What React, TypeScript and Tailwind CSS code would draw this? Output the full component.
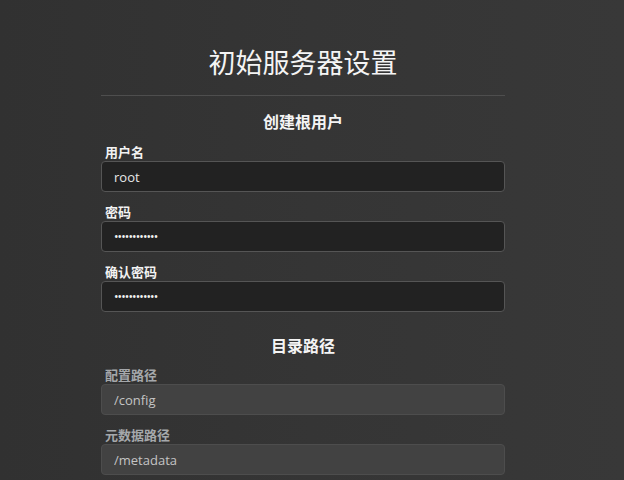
import React, { useState } from 'react';

type FieldProps = {
  label: string;
  value: string;
  type?: string;
  disabled?: boolean;
  onChange?: (v: string) => void;
};

function Field({ label, value, type = 'text', disabled, onChange }: FieldProps) {
  const secret = type === 'password';
  return (
    <div className="flex flex-col">
      <label
        className={
          disabled
            ? 'pl-1 text-[13px] leading-[18px] font-bold text-[#a5a8ab]'
            : 'pl-1 text-[13px] leading-[18px] font-bold text-[#f2f2f2]'
        }
      >
        {label}
      </label>
      <input
        type={type}
        value={value}
        disabled={disabled}
        onChange={(e) => onChange?.(e.target.value)}
        className={
          disabled
            ? 'h-[31px] w-full rounded-[4px] border border-[#4d4d4d] bg-[#424242] px-3 text-[13px] text-[#c4c4c4] outline-none'
            : secret
              ? 'h-[31px] w-full rounded-[4px] border border-[#555555] bg-[#222222] px-3 text-[12px] tracking-[-0.9px] text-[#f0f0f0] outline-none'
              : 'h-[31px] w-full rounded-[4px] border border-[#555555] bg-[#222222] px-3 text-[13px] text-[#e8e8e8] outline-none'
        }
      />
    </div>
  );
}

export default function App() {
  const [username, setUsername] = useState('root');
  const [password, setPassword] = useState('rootpassword');
  const [confirm, setConfirm] = useState('rootpassword');

  return (
    <div
      className="min-h-screen w-full bg-gradient-to-r from-[#313131] via-[#353535] to-[#383838] pr-[18px] text-white"
      style={{ fontFamily: '"Open Sans", "Noto Sans CJK SC", sans-serif' }}
    >
      <div className="mx-auto w-[404px] pt-[45px]">
        <h1 className="border-b border-[#4e4e4e] pb-[14px] text-center text-[27px] leading-[36px] font-normal text-[#f4f4f4]">
          初始服务器设置
        </h1>

        {/* root account */}
        <h2 className="mt-[14px] text-center text-[16px] leading-[24px] font-bold text-[#f4f4f4]">创建根用户</h2>
        <div className="mt-[9px] flex flex-col gap-[11px]">
          <Field label="用户名" value={username} onChange={setUsername} />
          <Field label="密码" type="password" value={password} onChange={setPassword} />
          <Field label="确认密码" type="password" value={confirm} onChange={setConfirm} />
        </div>

        {/* storage paths */}
        <h2 className="mt-[22px] text-center text-[16px] leading-[24px] font-bold text-[#f4f4f4]">目录路径</h2>
        <div className="mt-[8px] flex flex-col gap-[11px]">
          <Field label="配置路径" value="/config" disabled />
          <Field label="元数据路径" value="/metadata" disabled />
        </div>
      </div>
    </div>
  );
}
